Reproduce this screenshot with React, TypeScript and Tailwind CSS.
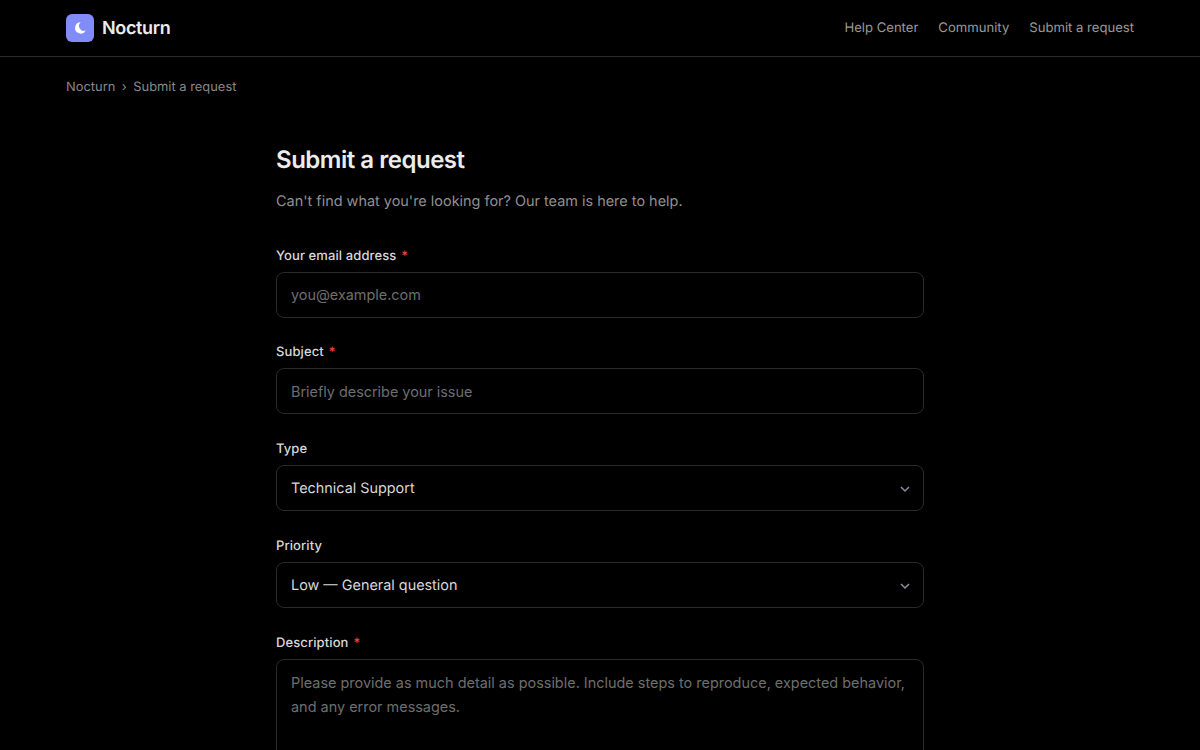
import React from "react";

const star = <span className="ml-[5px] text-[#ef4444]">*</span>;

function Label({ children, required }: { children: React.ReactNode; required?: boolean }) {
  return (
    <label className="block mb-1 text-[13px] leading-[23px] font-medium tracking-[0.1px] text-[#d8d8d8]">
      {children}
      {required && star}
    </label>
  );
}

function Chevron() {
  return (
    <svg width="12" height="12" viewBox="0 0 12 12" fill="none" className="ml-auto">
      <path d="M2 4l4 4 4-4" stroke="#888ea0" strokeWidth="1.5" />
    </svg>
  );
}

function Input({ placeholder }: { placeholder: string }) {
  return (
    <input
      placeholder={placeholder}
      className="block w-full h-[46px] px-[14px] rounded-lg border border-[#2a2a2a] bg-black text-[14.4px] text-white placeholder:text-[#6e6e6e] outline-none"
    />
  );
}

function Select({ value }: { value: string }) {
  return (
    <div className="flex items-center w-full h-[46px] pl-[14px] pr-[12px] pt-[2px] rounded-lg border border-[#2a2a2a] bg-black text-[14.4px] text-[#d8d8d8]">
      {value}
      <Chevron />
    </div>
  );
}

export default function App() {
  return (
    <div className="h-[750px] overflow-hidden bg-black font-['Inter',sans-serif] antialiased [text-rendering:geometricPrecision]">
      <header className="flex items-center justify-between h-[57px] px-[66px] border-b border-[#2a2a2a]">
        <div className="flex items-center gap-2">
          <div className="w-7 h-7 rounded-md bg-[#818cf8]">
            <svg width="28" height="28" viewBox="0 0 28 28" fill="#ffffff">
              <path d="M14.7 8.2A5.7 5.7 0 1 0 19.8 16.6A5 5 0 0 1 14.7 8.2z" />
            </svg>
          </div>
          <span className="pt-px text-lg font-semibold tracking-[-0.02em] text-[#ececec]">Nocturn</span>
        </div>
        <nav className="flex items-center gap-5 pt-[2px] text-[13.1px] text-[#9a9a9a]">
          <span>Help Center</span>
          <span>Community</span>
          <span>Submit a request</span>
        </nav>
      </header>

      <div className="flex items-center gap-[6.5px] px-[66px] pt-[22px] text-[12.9px] leading-[18px] text-[#888888]">
        <span>Nocturn</span>
        <span>›</span>
        <span>Submit a request</span>
      </div>

      <main className="w-[648px] mx-auto pt-[47px]">
        <h1 className="text-2xl leading-[32px] font-semibold tracking-[-0.02em] text-[#ececec]">Submit a request</h1>
        <p className="mt-[14px] mb-[30.6px] text-[14.45px] leading-[24px] text-[#909090]">
          Can't find what you're looking for? Our team is here to help.
        </p>

        <div className="flex flex-col gap-[23.75px]">
          <div>
            <Label required>Your email address</Label>
            <Input placeholder="you@example.com" />
          </div>
          <div>
            <Label required>Subject</Label>
            <Input placeholder="Briefly describe your issue" />
          </div>
          <div>
            <Label>Type</Label>
            <Select value="Technical Support" />
          </div>
          <div>
            <Label>Priority</Label>
            <Select value="Low — General question" />
          </div>
          <div>
            <Label required>Description</Label>
            <textarea
              placeholder="Please provide as much detail as possible. Include steps to reproduce, expected behavior, and any error messages."
              className="block w-full h-[160px] px-[14px] py-[11px] rounded-lg border border-[#2a2a2a] bg-black text-[14.45px] leading-[24px] text-white placeholder:text-[#6e6e6e] outline-none resize-none"
            />
          </div>
        </div>
      </main>
    </div>
  );
}
